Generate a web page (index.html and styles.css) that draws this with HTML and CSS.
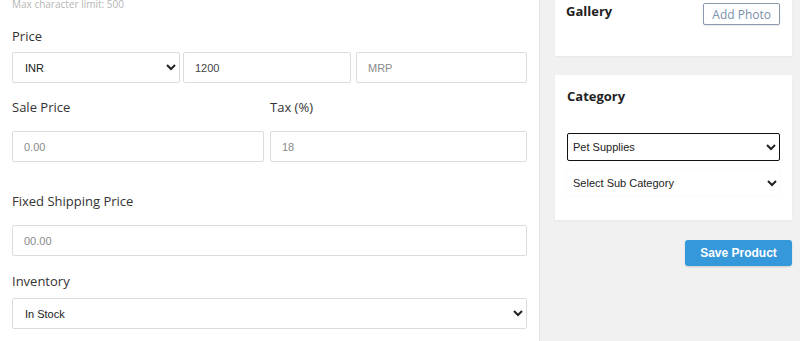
FILE: index.html
```html
<!DOCTYPE html>
<html lang="en">
<head>
    <meta charset="UTF-8">
    <meta name="viewport" content="width=device-width, initial-scale=1.0">
    <title>Edit Product</title>
    <link rel="stylesheet" href="styles.css">
</head>
<body>
    <div class="page">
        <div class="main-panel">
            <div class="hint">Max character limit: 500</div>

            <label class="field-label label-price">Price</label>
            <div class="price-row">
                <select class="field field-select currency">
                    <option>INR</option>
                </select>
                <input class="field price" type="text" value="1200">
                <input class="field mrp" type="text" placeholder="MRP">
            </div>

            <div class="two-col">
                <div class="col">
                    <label class="field-label">Sale Price</label>
                    <input class="field" type="text" placeholder="0.00">
                </div>
                <div class="col">
                    <label class="field-label">Tax (%)</label>
                    <input class="field" type="text" placeholder="18">
                </div>
            </div>

            <label class="field-label label-shipping">Fixed Shipping Price</label>
            <input class="field" type="text" placeholder="00.00">

            <label class="field-label label-inventory">Inventory</label>
            <select class="field field-select">
                <option>In Stock</option>
            </select>
        </div>

        <div class="side-panel">
            <div class="card gallery-card">
                <div class="card-title">Gallery</div>
                <button class="add-photo">Add Photo</button>
            </div>

            <div class="card category-card">
                <div class="card-title">Category</div>
                <select class="cat-select focused">
                    <option>Pet Supplies</option>
                </select>
                <select class="cat-select plain">
                    <option>Select Sub Category</option>
                </select>
            </div>

            <div class="actions">
                <button class="save-button">Save Product</button>
            </div>
        </div>
    </div>
</body>
</html>
```

FILE: styles.css
```css
html, body {
    margin: 0;
    padding: 0;
    height: 100%;
    overflow: hidden;
}

body {
    font-family: "Open Sans", sans-serif;
    background: #f1f1f1;
    color: #333;
}

.page {
    display: flex;
    height: 100%;
}

.main-panel {
    width: 515px;
    padding: 0 12px;
    background: #fff;
    border-left: 1px solid #e4e4e4;
    border-right: 1px solid #e4e4e4;
    margin-left: -1px;
}

.hint {
    font-size: 10px;
    color: #b5b5b5;
    margin-top: -3px;
    line-height: 14px;
}

.field-label {
    display: block;
    font-size: 13px;
    line-height: 18px;
    color: #333;
}

.label-price {
    margin-top: 16px;
    margin-bottom: 7px;
}

.field {
    box-sizing: border-box;
    display: block;
    width: 100%;
    height: 31px;
    padding: 0 11px;
    border: 1px solid #dcdcdc;
    border-radius: 2px;
    background: #fff;
    font-family: "Liberation Sans", Arial, sans-serif;
    font-size: 11px;
    color: #444;
    outline: none;
}

.field::placeholder {
    color: #8a8a8a;
}

.field-select {
    padding: 0 8px;
    color: #222;
}

.price-row {
    display: flex;
    gap: 3px;
}

.price-row .currency {
    width: 169px;
}

.price-row .price {
    width: 169px;
}

.price-row .mrp {
    width: 172px;
    margin-left: 2px;
}

.two-col {
    display: flex;
    gap: 6px;
    margin-top: 15px;
}

.two-col .col:first-child {
    width: 252px;
}

.two-col .col:last-child {
    flex: 1;
}

.two-col .field-label {
    margin-bottom: 15px;
}

.label-shipping {
    margin-top: 30px;
    margin-bottom: 15px;
}

.label-inventory {
    margin-top: 16px;
    margin-bottom: 8px;
}

.side-panel {
    width: 237px;
    margin-left: 15px;
}

.card {
    background: #fff;
    box-shadow: 0 1px 2px rgba(0, 0, 0, 0.05);
}

.card-title {
    font-size: 13px;
    font-weight: bold;
    color: #222;
}

.gallery-card {
    display: flex;
    justify-content: space-between;
    align-items: flex-start;
    height: 56px;
    padding: 0 12px 0 11px;
    box-sizing: border-box;
}

.gallery-card .card-title {
    margin-top: 2px;
}

.add-photo {
    margin-top: 3px;
    height: 22px;
    padding: 0 8px;
    border: 1px solid #8a9bb0;
    border-radius: 2px;
    background: #fff;
    color: #7890aa;
    font-family: "Open Sans", sans-serif;
    font-size: 12px;
    box-shadow: 0 1px 2px rgba(0, 0, 0, 0.1);
}

.category-card {
    margin-top: 19px;
    height: 145px;
    padding: 12px 12px 0 12px;
    box-sizing: border-box;
}

.category-card .card-title {
    margin-bottom: 28px;
}

.cat-select {
    display: block;
    width: 100%;
    box-sizing: border-box;
    height: 28px;
    font-family: "Liberation Sans", Arial, sans-serif;
    font-size: 11px;
    color: #222;
    background: #fff;
    outline: none;
}

.cat-select.focused {
    border: 1px solid #111;
    border-radius: 2px;
    padding: 0 1px;
}

.cat-select.plain {
    margin-top: 9px;
    border: none;
    padding: 0 2px;
    height: 26px;
    box-shadow: 0 0 3px rgba(0, 0, 0, 0.04);
}

.actions {
    display: flex;
    justify-content: flex-end;
    margin-top: 20px;
}

.save-button {
    height: 26px;
    width: 107px;
    border: none;
    border-radius: 3px;
    background: #3498db;
    color: #fff;
    font-family: "Liberation Sans", Arial, sans-serif;
    font-weight: bold;
    font-size: 12px;
    box-shadow: 0 1px 2px rgba(0, 0, 0, 0.15);
}
```
